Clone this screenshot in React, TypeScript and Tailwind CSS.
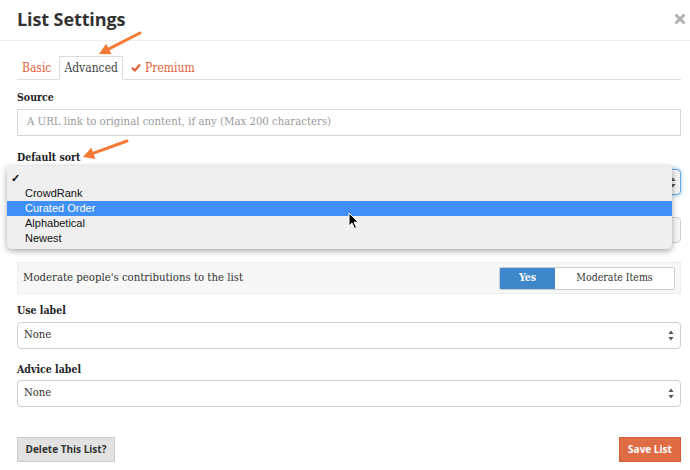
import React from "react";

const serif = "font-['DejaVu_Serif_Condensed','DejaVu_Serif',serif]";

function UpDown() {
  return (
    <svg width="6" height="11" viewBox="0 0 6 11" className="shrink-0">
      <path d="M3 0.5 L5.6 4 L0.4 4 Z" fill="#555" />
      <path d="M3 10.5 L5.6 7 L0.4 7 Z" fill="#555" />
    </svg>
  );
}

function Label({ children, className = "" }: { children: React.ReactNode; className?: string }) {
  return (
    <div className={`${serif} font-bold text-[10.5px] leading-[14px] text-[#222] ${className}`}>{children}</div>
  );
}

function SelectBox({ value, className = "" }: { value: string; className?: string }) {
  return (
    <div
      className={`h-[27px] rounded-[4px] border border-[#cfcfcf] bg-white flex items-center justify-between pl-[6px] pr-[6px] ${className}`}
    >
      <span className={`${serif} text-[11.2px] text-[#333]`}>{value}</span>
      <UpDown />
    </div>
  );
}

function OrangeArrow({ x1, y1, x2, y2 }: { x1: number; y1: number; x2: number; y2: number }) {
  const dx = x2 - x1;
  const dy = y2 - y1;
  const len = Math.sqrt(dx * dx + dy * dy);
  const ux = dx / len;
  const uy = dy / len;
  const hl = 11;
  const hw = 6;
  const bx = x2 - ux * hl;
  const by = y2 - uy * hl;
  const p1 = `${bx - uy * hw},${by + ux * hw}`;
  const p2 = `${bx + uy * hw},${by - ux * hw}`;
  return (
    <g>
      <line x1={x1} y1={y1} x2={bx + ux * 2} y2={by + uy * 2} stroke="#f47a36" strokeWidth="3" strokeLinecap="round" />
      <polygon points={`${x2},${y2} ${p1} ${p2}`} fill="#f47a36" />
    </g>
  );
}

export default function App() {
  return (
    <div className="relative w-[690px] h-[470px] bg-white overflow-hidden">
      {/* Header */}
      <div className="h-[41px] border-b border-[#eeeeee] flex items-center justify-between pl-[17px] pr-[4px]">
        <h1 className="font-['Open_Sans',sans-serif] font-bold text-[18px] tracking-[-0.1px] leading-none text-[#333] -mt-[2px]">
          List Settings
        </h1>
        <svg width="12" height="12" viewBox="0 0 12 12" className="-mt-[2px]">
          <path d="M1.5 1.5 L10.5 10.5 M10.5 1.5 L1.5 10.5" stroke="#b3b3b3" strokeWidth="3" strokeLinecap="butt" />
        </svg>
      </div>

      <div className="pl-[17px] pr-[9px]">
        {/* Tabs */}
        <div className={`mt-[15px] flex items-end h-[24px] border-b border-[#dddddd] ${serif} text-[12px]`}>
          <div className="h-[23px] px-[5px] mr-[3px] flex items-center text-[#e2603a]">Basic</div>
          <div className="h-[24px] px-[4px] mr-[3px] -mb-px flex items-center border border-[#dddddd] border-b-white bg-white text-[#444]">
            Advanced
          </div>
          <div className="h-[23px] px-[5px] flex items-center gap-[4px] text-[#e2603a]">
            <svg width="10" height="9" viewBox="0 0 10 9">
              <path d="M1 4.8 L3.8 7.5 L9 1.5" stroke="#e2603a" strokeWidth="2.2" fill="none" />
            </svg>
            Premium
          </div>
        </div>

        {/* Source */}
        <Label className="mt-[10px]">Source</Label>
        <div className="mt-[5px] h-[27px] border border-[#d6d6d6] bg-white flex items-center pl-[9px]">
          <span className={`${serif} text-[11.3px] text-[#9a9a9a]`}>
            A URL link to original content, if any (Max 200 characters)
          </span>
        </div>

        {/* Default sort */}
        <Label className="mt-[14px]">Default sort</Label>
        <div className="mt-[5px] h-[26px] rounded-[4px] border border-[#62a6e6] shadow-[0_0_4px_rgba(80,150,230,0.6)] bg-[#f3f3f3] flex items-center justify-end pr-[4px]">
          <UpDown />
        </div>

        {/* Hidden field behind dropdown */}
        <div className="mt-[22px] h-[26px] rounded-[4px] border border-[#cfcfcf] bg-[#f7f7f7]" />

        {/* Moderate */}
        <div className="mt-[19px] h-[32px] border border-[#eeeeee] bg-[#f7f7f7] flex items-center justify-between pl-[5px] pr-[5px]">
          <span className={`${serif} text-[11.3px] text-[#333]`}>Moderate people's contributions to the list</span>
          <div className="flex h-[23px] rounded-[2px] border border-[#cccccc] overflow-hidden">
            <div className={`w-[55px] bg-[#3e87cb] text-white font-bold ${serif} text-[10.5px] flex items-center justify-center`}>
              Yes
            </div>
            <div className={`w-[119px] bg-white text-[#333] ${serif} text-[10.5px] flex items-center justify-center`}>
              Moderate Items
            </div>
          </div>
        </div>

        {/* Use label */}
        <Label className="mt-[9px]">Use label</Label>
        <SelectBox value="None" className="mt-[5px]" />

        {/* Advice label */}
        <Label className="mt-[13px]">Advice label</Label>
        <SelectBox value="None" className="mt-[4px]" />

        {/* Buttons */}
        <div className="mt-[30px] flex items-center justify-between">
          <button className="h-[25px] w-[98px] bg-[#e2e2e2] border border-[#cccccc] font-['Open_Sans',sans-serif] font-bold text-[10px] text-[#333]">
            Delete This List?
          </button>
          <button className="h-[25px] w-[62px] bg-[#e06c45] border border-[#d75f38] font-['Open_Sans',sans-serif] font-bold text-[10px] text-white">
            Save List
          </button>
        </div>
      </div>

      {/* Native dropdown menu overlay */}
      <div className="absolute left-[7px] top-[166px] w-[665px] h-[83px] bg-[#efefef] rounded-b-[5px] rounded-t-[2px] shadow-[0_2px_6px_rgba(0,0,0,0.35)] pt-[5px] font-['Liberation_Sans',Arial,sans-serif] text-[11px] text-[#111]">
        <div className="h-[15px] flex items-center pl-[4px] text-[11px] font-bold">✓</div>
        <div className="h-[15px] flex items-center pl-[18px]">CrowdRank</div>
        <div className="h-[15px] flex items-center pl-[18px] bg-[#3f8ff7] text-white">Curated Order</div>
        <div className="h-[15px] flex items-center pl-[18px]">Alphabetical</div>
        <div className="h-[15px] flex items-center pl-[18px]">Newest</div>
      </div>

      {/* Annotation arrows */}
      <svg className="absolute left-0 top-0 pointer-events-none" width="690" height="470">
        <OrangeArrow x1={140} y1={33} x2={99} y2={54} />
        <OrangeArrow x1={127} y1={141} x2={83} y2={157} />
      </svg>

      {/* Mouse cursor */}
      <svg className="absolute left-[348px] top-[212px]" width="12" height="18" viewBox="0 0 12 18">
        <path d="M1 1 L1 14 L4 11 L6.5 16.5 L8.5 15.5 L6 10.2 L10.2 10.2 Z" fill="#000" stroke="#fff" strokeWidth="1" strokeLinejoin="round" />
      </svg>
    </div>
  );
}
